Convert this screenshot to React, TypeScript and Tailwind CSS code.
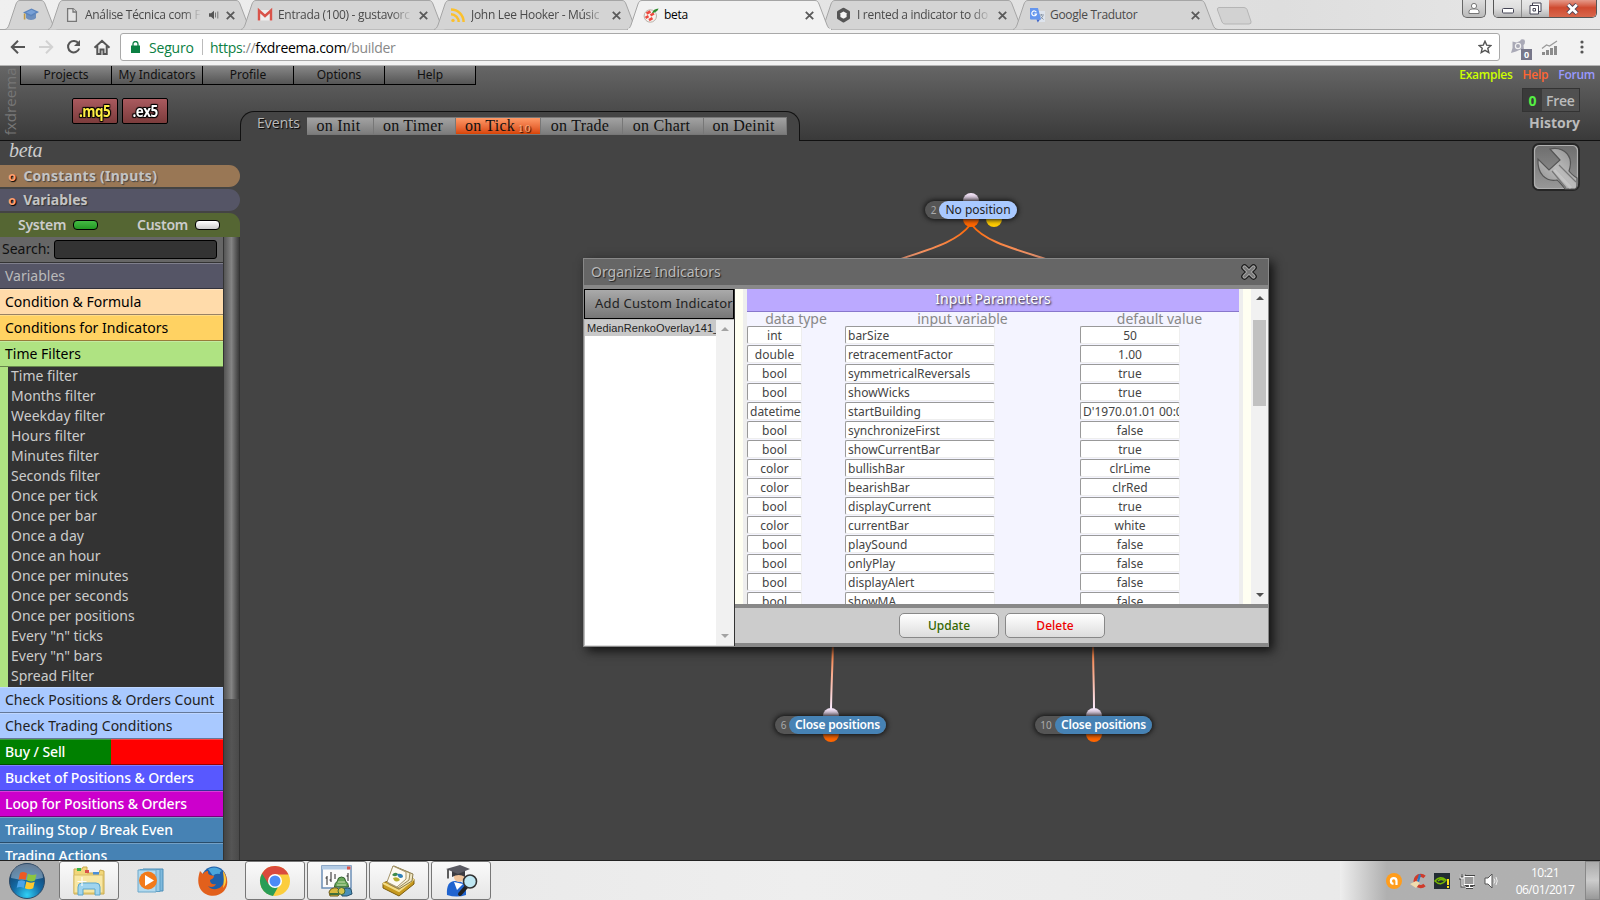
import type { ReactNode } from 'react';
import { clsx } from 'clsx';

type BrowserTab = { title: string; icon: ReactNode; audio?: boolean; active?: boolean; faded?: boolean };

const browserTabs: BrowserTab[] = [
  { title: 'Análise Técnica com F', icon: <PageIcon />, audio: true, faded: true },
  { title: 'Entrada (100) - gustavorc', icon: <GmailIcon />, faded: true },
  { title: 'John Lee Hooker - Músic', icon: <RssIcon />, faded: true },
  { title: 'beta', icon: <DreemaIcon />, active: true },
  { title: 'I rented a indicator to do', icon: <HexIcon />, faded: true },
  { title: 'Google Tradutor', icon: <TranslateIcon /> },
];

const menuItems = ['Projects', 'My Indicators', 'Profile', 'Options', 'Help'];

const events = [
  { label: 'on Init', width: 'w-[67px]' },
  { label: 'on Timer', width: 'w-[82px]' },
  { label: 'on Tick', width: 'w-[85px]', count: 10 },
  { label: 'on Trade', width: 'w-[82px]' },
  { label: 'on Chart', width: 'w-[81px]' },
  { label: 'on Deinit', width: 'w-[83px]' },
];

const topCategories = [
  { label: 'Variables', style: 'bg-[#555566] text-[#bbb]' },
  { label: 'Condition & Formula', style: 'bg-[#ffdbaa] text-black' },
  { label: 'Conditions for Indicators', style: 'bg-[#ffd262] text-black' },
  { label: 'Time Filters', style: 'bg-[#afe382] text-black' },
];

const timeFilters = [
  'Time filter', 'Months filter', 'Weekday filter', 'Hours filter', 'Minutes filter', 'Seconds filter',
  'Once per tick', 'Once per bar', 'Once a day', 'Once an hour', 'Once per minutes', 'Once per seconds',
  'Once per positions', 'Every "n" ticks', 'Every "n" bars', 'Spread Filter',
];

const bottomCategories = [
  { label: 'Check Positions & Orders Count', style: 'bg-[#a9c9ff] text-[#222]' },
  { label: 'Check Trading Conditions', style: 'bg-[#a9c9ff] text-[#222]' },
  { label: 'Buy / Sell', style: 'bg-linear-to-r from-[#008000] from-50% to-[#ff0000] to-50% text-white font-medium tracking-[-0.1px]' },
  { label: 'Bucket of Positions & Orders', style: 'bg-[#5858ff] text-white font-medium tracking-[-0.1px]' },
  { label: 'Loop for Positions & Orders', style: 'bg-[#cc00cc] text-white font-medium tracking-[-0.1px]' },
  { label: 'Trailing Stop / Break Even', style: 'bg-[#4682b4] text-white font-medium tracking-[-0.1px]' },
  { label: 'Trading Actions', style: 'bg-[#4682b4] text-white font-medium tracking-[-0.1px]' },
];

const params = [
  ['int', 'barSize', '50'],
  ['double', 'retracementFactor', '1.00'],
  ['bool', 'symmetricalReversals', 'true'],
  ['bool', 'showWicks', 'true'],
  ['datetime', 'startBuilding', "D'1970.01.01 00:00"],
  ['bool', 'synchronizeFirst', 'false'],
  ['bool', 'showCurrentBar', 'true'],
  ['color', 'bullishBar', 'clrLime'],
  ['color', 'bearishBar', 'clrRed'],
  ['bool', 'displayCurrent', 'true'],
  ['color', 'currentBar', 'white'],
  ['bool', 'playSound', 'false'],
  ['bool', 'onlyPlay', 'false'],
  ['bool', 'displayAlert', 'false'],
  ['bool', 'showMA', 'false'],
];

/* ---------- browser icons ---------- */

function PageIcon() {
  return (
    <svg width="16" height="16" viewBox="0 0 16 16" fill="#e4e4e4" stroke="#777" strokeWidth="1.3">
      <path d="M3.6 1.6h5.6l3.2 3.2v9.6H3.6z" />
      <path d="M9 1.6V5h3.4" />
    </svg>
  );
}

function GmailIcon() {
  return (
    <svg width="16" height="16" viewBox="0 0 16 16">
      <path d="M1 3h14v10.5H1z" fill="#eee" />
      <path d="M2 13.5V3.5l6 5.500 6-5.500v10" fill="none" stroke="#d9534a" strokeWidth="2.4" />
    </svg>
  );
}

function RssIcon() {
  return (
    <svg width="16" height="16" viewBox="0 0 16 16" fill="none" stroke="#fbc02d" strokeWidth="2.5">
      <circle cx="3" cy="13.4" r="1.7" fill="#fbc02d" stroke="none" />
      <path d="M1 7.3a7.7 7.7 0 0 1 7.7 7.7M1 2.4A12.6 12.6 0 0 1 13.6 15" />
    </svg>
  );
}

function DreemaIcon() {
  return (
    <svg width="16" height="16" viewBox="0 0 16 16">
      <circle cx="7.3" cy="9" r="6.2" fill="#f6f2ee" stroke="#b9b0a8" />
      <path d="M3.500 6.500l4-2M2.500 10.800l3-1.600M7.500 8.300l3.500-1.900M6 13.200l3.500-2" stroke="#ee4a40" strokeWidth="2.600" />
      <path d="M9 6c1-3 3-4.400 6.600-4.600C14.800 4 12.500 5.500 9 6z" fill="#2e8b2e" />
    </svg>
  );
}

function HexIcon() {
  return (
    <svg width="16" height="16" viewBox="0 0 16 16">
      <path d="M7.500 2.500l4.800 2.800v5.600l-4.800 2.800-4.800-2.800V5.300z" fill="#f4f4f4" stroke="#555" strokeWidth="3.400" strokeLinejoin="round" />
    </svg>
  );
}

function TranslateIcon() {
  return (
    <svg width="17" height="17" viewBox="0 0 17 17">
      <path d="M6 4h10v11H9z" fill="#dde3ec" />
      <path d="M10 8h5M12.500 7v1.500M14 9l-3 3.500M11.500 9.500l3 3" stroke="#8a97a8" fill="none" />
      <path d="M1 1h8l3 11.500H2a1 1 0 0 1-1-1z" fill="#6596ee" />
      <path d="M7.500 12.500H11L8.800 15.500z" fill="#4267c8" />
      <path d="M7.300 5.200A2.400 2.400 0 1 0 7.500 7H5.300" fill="none" stroke="#fff" strokeWidth="1.200" />
    </svg>
  );
}

function CapIcon() {
  return (
    <svg width="18" height="16" viewBox="0 0 18 16">
      <path d="M4 8v4c2 2.600 8 2.600 10 0V8z" fill="#6d8fbe" />
      <path d="M1 6.500L9.500 2.500 17 6 9 10.500z" fill="#5b84bd" />
      <path d="M4 6.500l5.500-2.700 4.500 2.200-5 2.700z" fill="#78a0d6" />
      <path d="M2.600 7.500v6" stroke="#c09a45" strokeWidth="1.600" />
    </svg>
  );
}

function CloseIcon() {
  return (
    <svg width="9" height="9" viewBox="0 0 9 9" stroke="#5a5a5a" strokeWidth="1.800">
      <path d="M.8.8l7.400 7.400M8.200.8L.8 8.200" />
    </svg>
  );
}

/* ---------- browser chrome ---------- */

function Tab({ tab }: { tab: BrowserTab }) {
  return (
    <div className={clsx('relative -mr-3 h-[29px] w-[205px] shrink-0', tab.active && 'z-10')}>
      <svg className="absolute inset-0" width="205" height="30" viewBox="0 0 205 30">
        <path
          d="M0 29.500C2 29 3 27.500 4 25L11 4C12 1.500 13 .5 15 .5H188c2 0 3 1 4 3.500l8 21c1 2.500 2 4 5 4.500"
          fill={tab.active ? '#f2f2f2' : '#d4d4d4'}
          stroke="#a5a5a5"
        />
        {tab.active && <path d="M1 29.500H204" stroke="#f2f2f2" strokeWidth="2" />}
      </svg>
      <div className="relative flex h-full items-center pl-4 pt-px">
        <span className="w-[21px] shrink-0">{tab.icon}</span>
        <span
          className={clsx(
            'overflow-hidden whitespace-nowrap font-["Open_Sans",sans-serif] text-[12px] tracking-[-0.3px]',
            tab.active ? 'text-black' : 'text-[#4a4a4a]',
            tab.audio ? 'w-[116px]' : 'w-[134px]',
            tab.faded && 'mask-r-from-85%',
          )}
        >
          {tab.title}
        </span>
        {tab.audio && (
          <svg className="ml-2" width="10" height="10" viewBox="0 0 10 10">
            <path d="M0 3.300h2L5 .8v8.400L2 6.700H0z" fill="#555" />
            <path d="M6.500 2.500v5M8.800 1.500v7" stroke="#777" />
          </svg>
        )}
        <span className="ml-[7px]"><CloseIcon /></span>
      </div>
    </div>
  );
}

function TabStrip() {
  return (
    <div className="flex h-[29px] bg-linear-to-r from-[#f0f0f0] via-[#dedede] via-80% to-[#e8e8e8]">
      <div className="relative -mr-[10px] ml-[5px] w-[53px] shrink-0">
        <svg className="absolute inset-0" width="53" height="30" viewBox="0 0 53 30">
          <path d="M0 29.500c2-.5 3-2 4-4.500L11 4c1-2.500 2-3.500 4-3.500h21c2 0 3 1 4 3.500l8 21c1 2.500 2 4 5 4.500" fill="#d4d4d4" stroke="#a5a5a5" />
        </svg>
        <div className="relative pl-[17px] pt-1.5"><CapIcon /></div>
      </div>
      <div className="flex">
        {browserTabs.map((tab) => <Tab key={tab.title} tab={tab} />)}
      </div>
      <svg className="ml-[10px] mt-[6px]" width="36" height="19" viewBox="0 0 36 19">
        <path d="M3 1.500h25q2 0 3 2l4 12q.5 2.500-2 2.500H9q-2 0-3-2L1.500 4Q1 1.500 3 1.500z" fill="#d2d2d2" stroke="#b5b5b5" />
      </svg>
      <div className="ml-auto mr-[3px] flex h-[18px]">
        <div className="mr-[7px] flex w-6 items-center justify-center rounded-b-[5px] border border-t-0 border-[#666] bg-linear-to-b from-[#ddd] to-[#bbb]">
          <svg width="12" height="13" viewBox="0 0 12 13" fill="#fff" stroke="#777">
            <path d="M1 11.500V9q1-2 3-2h4q2 0 3 2v2.500z" />
            <circle cx="6" cy="4" r="2.600" />
          </svg>
        </div>
        <div className="flex overflow-hidden rounded-b-[5px] border border-t-0 border-[#555]">
          <div className="flex w-7 items-center justify-center border-r border-[#888] bg-linear-to-b from-[#e8e8e8] via-[#ddd] to-[#b4b4b4]">
            <svg className="mt-1" width="12" height="6" viewBox="0 0 12 6"><rect x=".5" y=".5" width="11" height="4.500" rx="1" fill="#fff" stroke="#445" /></svg>
          </div>
          <div className="flex w-[27px] items-center justify-center bg-linear-to-b from-[#e8e8e8] via-[#ddd] to-[#b4b4b4]">
            <svg width="13" height="13" viewBox="0 0 13 13" fill="#fff" stroke="#445">
              <path d="M3.500 1h8.500v8.500H3.500z" />
              <path d="M1 3.500h8.500V12H1z" />
              <path d="M4 6.500h2.500V9H4z" />
            </svg>
          </div>
          <div className="flex w-[47px] items-center justify-center bg-linear-to-b from-[#e59a8a] via-[#cf4a30] via-45% to-[#d8674c]">
            <svg width="13" height="12" viewBox="0 0 13 12">
              <path d="M2 1.500l9 9M11 1.500l-9 9" stroke="#545" strokeWidth="4.600" />
              <path d="M2.200 1.700l8.600 8.600M10.800 1.700l-8.600 8.600" stroke="#fff" strokeWidth="2.800" />
            </svg>
          </div>
        </div>
      </div>
    </div>
  );
}

function Toolbar() {
  return (
    <div className="flex h-[37px] items-center border-b border-t border-b-[#b4b4b4] border-t-[#a5a5a5] bg-[#f2f2f2] pb-px">
      <div className="flex w-[120px] gap-3 pl-[10px]">
        <svg width="16" height="16" viewBox="0 0 16 16" fill="none" stroke="#555" strokeWidth="2"><path d="M15 8H2M8 1.800L1.800 8 8 14.200" /></svg>
        <svg width="16" height="16" viewBox="0 0 16 16" fill="none" stroke="#d2d2d2" strokeWidth="2"><path d="M1 8h13M8 1.800L14.200 8 8 14.200" /></svg>
        <svg width="16" height="16" viewBox="0 0 16 16" fill="none" stroke="#555" strokeWidth="2"><path d="M12.500 4.500A5.700 5.700 0 1 0 13.200 9.500" /><path d="M14 1v6H8z" fill="#555" stroke="none" /></svg>
        <svg className="-ml-px" width="18" height="16" viewBox="0 0 18 16" fill="none" stroke="#555" strokeWidth="2"><path d="M1.500 8.800L9 1.800l7.500 7M4.300 7v8h3.200v-4.500h3V15h3.200V7" /></svg>
      </div>
      <div className="flex h-7 w-[1380px] items-center rounded-[3px] border border-[#a9a9a9] bg-white pl-[10px] font-['Open_Sans',sans-serif] text-[14px]">
        <svg width="9" height="12" viewBox="0 0 9 12"><path d="M0 4.500h9V12H0z" fill="#0b8043" /><path d="M2 5V3a2.500 2.500 0 0 1 5 0v2" fill="none" stroke="#0b8043" strokeWidth="1.300" /></svg>
        <span className="ml-[9px] w-[44px] whitespace-nowrap tracking-[-0.2px] text-[#0b8043]">Seguro</span>
        <span className="ml-[9px] mr-[7px] h-4 w-px bg-[#bbb]" />
        <span className="whitespace-nowrap tracking-[-0.3px] text-[#888]">
          <span className="text-[#0b8043]">https</span>://<span className="text-black">fxdreema.com</span>/builder
        </span>
        <svg className="ml-auto mr-[7px]" width="14" height="14" viewBox="0 0 14 14" fill="none" stroke="#555" strokeWidth="1.400"><path d="M7 1.200l1.700 3.900 4.300.4-3.200 2.800 1 4.200L7 10.300l-3.800 2.200 1-4.200L1 5.500l4.300-.4z" /></svg>
      </div>
      <div className="relative ml-[10px] w-[24px]">
        <svg width="16" height="16" viewBox="0 0 16 16">
          <path d="M2.500 2.500l4 1L10 2 11 .5q4-1 4 2T13.500 6l.5 5-3.500-.5L6 12.500 1 14l1.500-5z" fill="#a9a9b6" />
          <circle cx="8" cy="7" r="2.600" fill="none" stroke="#f2f2f2" strokeWidth="1.200" />
        </svg>
        <span className="absolute left-[11px] top-[10px] flex h-[11px] w-[11px] items-center justify-center bg-[#77778a] font-['Open_Sans',sans-serif] text-[9px] font-bold text-white">0</span>
      </div>
      <svg className="ml-[7px] mt-px" width="17" height="16" viewBox="0 0 17 16" fill="#8c8c8c">
        <path d="M1 12h3v3H1zM5 10h3v5H5zM9 8h3v7H9zM13 6h3v9h-3z" />
        <path d="M1 8.500l4.500-3.500 3 1L16 1" fill="none" stroke="#999" strokeWidth="1.200" />
      </svg>
      <svg className="ml-[22px]" width="4" height="14" viewBox="0 0 4 14" fill="#555"><circle cx="2" cy="2" r="1.600" /><circle cx="2" cy="7" r="1.600" /><circle cx="2" cy="12" r="1.600" /></svg>
    </div>
  );
}

/* ---------- builder header ---------- */

function Wrench() {
  return (
    <svg width="48" height="48" viewBox="0 0 48 48">
      <defs>
        <linearGradient id="plate" x1="0" y1="0" x2="0" y2="1"><stop offset="0" stopColor="#6c6c6c" /><stop offset="1" stopColor="#999" /></linearGradient>
        <linearGradient id="steel" x1="0" y1="1" x2="1" y2="0"><stop offset="0" stopColor="#888" /><stop offset=".5" stopColor="#bbb" /><stop offset="1" stopColor="#8a8a8a" /></linearGradient>
      </defs>
      <rect x="1" y="1" width="46" height="46" rx="6" fill="url(#plate)" stroke="#262626" strokeWidth="2" />
      <rect x="2.500" y="2.500" width="43" height="43" rx="5" fill="none" stroke="#b0b0b0" strokeWidth="1.200" />
      <path
        d="M18 6c8-2 17 1 20 10 1 4 0 9-1 12 2 3 5 5 8 7v8q0 2-2 3H33c-3-4-5-7-8-9C14 39 5 31 6 16l11 11L28 17z"
        fill="url(#steel)"
        stroke="#555"
        strokeWidth="1.200"
      />
      <path d="M22 27l17 18" stroke="#cfcfcf" strokeWidth="3" opacity=".6" />
      <path d="M20 28l14 17M27 22l17 17" stroke="#777" strokeWidth="1.200" />
    </svg>
  );
}

function FileButton({ children, color }: { children: ReactNode; color: string }) {
  return (
    <span className={clsx('flex h-[26px] w-[46px] items-center justify-center rounded-[2px] border border-black bg-linear-to-b from-[#aa5a5f] to-[#7c3c3c] [text-shadow:1px_1px_1px_#000,-1px_-1px_1px_#000,1px_-1px_1px_#000,-1px_1px_1px_#000,0_0_2px_#000]', color)}>
      <span className="scale-x-[0.84] leading-none">{children}</span>
    </span>
  );
}

function Header() {
  return (
    <header className="flex h-[75px] border-b border-[#111] bg-linear-to-b from-[#666] to-[#3a3a3a]">
      <div className="flex w-5 items-center justify-center">
        <span className="-rotate-90 pl-1 font-['Open_Sans',sans-serif] text-[15px] tracking-[0.1px] text-[#777]">fxdreema</span>
      </div>
      <div className="flex w-[220px] flex-col">
        <nav className="flex h-[19px] w-[456px] border-l border-black">
          {menuItems.map((item) => (
            <span key={item} className="flex h-[19px] w-[91px] items-center justify-center whitespace-nowrap border-b border-r border-black bg-linear-to-b from-[#888] to-[#555] text-[12px] text-[#111]">
              {item}
            </span>
          ))}
        </nav>
        <div className="ml-[52px] mt-[13px] flex gap-1 font-['Open_Sans',sans-serif] text-[16px] font-bold tracking-[-0.6px]">
          <FileButton color="text-[#ffee44]">.mq5</FileButton>
          <FileButton color="text-white">.ex5</FileButton>
        </div>
      </div>
      <div className="relative mb-[-1px] mt-[45px] flex h-[30px] w-[560px] rounded-t-[14px] border border-b-0 border-[#111] bg-[#444] pl-4">
        <span className="mt-0.5 w-[50px] font-['Open_Sans',sans-serif] text-[14px] leading-[17px] text-[#bbb] [text-shadow:1px_1px_1px_#000]">Events</span>
        <div className="mt-[5px] flex h-[18px]">
          {events.map((ev) => (
            <span
              key={ev.label}
              className={clsx(
                'relative flex items-center justify-center whitespace-nowrap border border-l-0 border-[#777] font-["Liberation_Serif",serif] text-[16px] tracking-[0.25px] text-[#111]',
                ev.width,
                ev.count ? 'bg-linear-to-b from-[#ff9966] to-[#d84400] pr-4' : 'bg-linear-to-b from-[#a2a2a2] to-[#7c7c7c] pr-[3px]',
              )}
            >
              {ev.label}
              {ev.count && <span className="absolute right-[9px] top-px font-['DejaVu_Serif',serif] text-[10px] leading-[20px] text-[#ffb07c] [text-shadow:1px_1px_1px_#000]">{ev.count}</span>}
            </span>
          ))}
        </div>
      </div>
      <div className="ml-auto flex flex-col items-end font-['Open_Sans',sans-serif]">
        <div className="flex h-[18px] items-center gap-[10px] pr-[5px] text-[12px] font-semibold tracking-[-0.25px]">
          <span className="text-[#ccff00]">Examples</span>
          <span className="text-[#ff6633]">Help</span>
          <span className="text-[#9999ff]">Forum</span>
        </div>
        <div className="mr-5 mt-1 flex h-6 w-[58px] items-center border border-[#333] bg-[#505050] text-[14px] font-semibold">
          <span className="flex h-full w-[19px] items-center justify-center bg-[#3a3a3a] font-bold text-[#55ee44]">0</span>
          <span className="pl-1 tracking-[-0.3px] text-[#bbb]">Free</span>
        </div>
        <span className="mr-5 mt-px text-[14px] font-bold leading-5 text-[#bbb]">History</span>
      </div>
    </header>
  );
}

/* ---------- sidebar ---------- */

function Category({ label, style }: { label: string; style: string }) {
  return (
    <div className={clsx('h-[26px] shrink-0 whitespace-nowrap border-b border-t border-b-black/40 border-t-white/25 bg-origin-border pl-[5px] text-[14px] leading-[23px]', style)}>
      {label}
    </div>
  );
}

function Sidebar() {
  return (
    <aside className="flex w-60 shrink-0 flex-col">
      <div className="h-6 pl-[9px] font-['Liberation_Serif',serif] text-[20px] italic leading-[19px] tracking-[-0.3px] text-[#ccc]">beta</div>
      <div className="flex h-[22px] items-center rounded-r-[11px] bg-[#997755] pb-0.5 pl-2 text-[14px] font-bold tracking-[0.25px] text-[#c4c4c4] [text-shadow:1px_1px_1px_#444]">
        <span className="mr-[7px] mt-1 text-[13px] text-[#ffa070] [text-shadow:1px_1px_1px_#000]">o</span>Constants (Inputs)
      </div>
      <div className="mt-0.5 flex h-[22px] items-center rounded-r-[11px] bg-[#555566] pb-0.5 pl-2 text-[14px] font-bold text-[#c4c4c4] [text-shadow:1px_1px_1px_#333]">
        <span className="mr-[7px] mt-1 text-[13px] text-[#ffa070] [text-shadow:1px_1px_1px_#000]">o</span>Variables
      </div>
      <div className="mt-0.5 flex h-6 items-center rounded-tr-[11px] bg-[#556633] pl-[18px] text-[14px] font-semibold tracking-[-0.25px] text-[#ccc]">
        <span className="-mt-0.5 w-[55px]">System</span>
        <span className="h-[10px] w-[25px] rounded-[4px] border border-black bg-linear-to-b from-[#44bb44] to-[#229922]" />
        <span className="-mt-0.5 ml-[39px] w-[58px]">Custom</span>
        <span className="h-[10px] w-[25px] rounded-[4px] border border-black bg-linear-to-b from-white to-[#ccc]" />
      </div>
      <div className="flex min-h-0 flex-1">
        <div className="flex w-[223px] flex-col overflow-hidden bg-[#333]">
          <div className="flex h-[26px] shrink-0 items-center border-b border-[#333] bg-[#666] pl-[2px] text-[14px] text-[#111]">
            <span className="-mt-0.5 w-[52px]">Search:</span>
            <span className="h-[19px] w-[163px] rounded-[3px] border border-black bg-[#333]" />
          </div>
          {topCategories.map((c) => <Category key={c.label} {...c} />)}
          <ul className="shrink-0 border-l-8 border-[#afe382] bg-[#333]">
            {timeFilters.map((name) => (
              <li key={name} className="h-5 pl-[3px] text-[14px] leading-[18px] text-[#ccc]">{name}</li>
            ))}
          </ul>
          {bottomCategories.map((c) => <Category key={c.label} {...c} />)}
        </div>
        <div className="w-[17px] border-x border-[#333] bg-linear-to-r from-[#444] via-[#555] to-[#4a4a4a]">
          <div className="h-[462px] bg-linear-to-r from-[#555] via-[#848484] to-[#3c3c3c]" />
        </div>
      </div>
    </aside>
  );
}

/* ---------- canvas ---------- */

type NodeProps = { id: number; label: string; place: string; idWidth: string; pill: string; ports: string; extra?: boolean };

function Block({ id, label, place, idWidth, pill, ports, extra }: NodeProps) {
  return (
    <div className={clsx('absolute', place)}>
      <span className={clsx('absolute top-[-8px] h-4 w-4 rounded-full bg-linear-to-b from-[#f8e8fc] to-[#998a9c]', ports)} />
      <span className={clsx('absolute top-[10px] h-4 w-4 rounded-full bg-[#ff6600]', ports)} />
      {extra && <span className="absolute left-[61px] top-[10px] h-4 w-4 rounded-full bg-[#ffcc00]" />}
      <div className="relative flex h-[18px] rounded-full bg-[#555] shadow-[0_0_5px_1px_#111]">
        <span className={clsx('text-center text-[10px] leading-[18px] text-[#aaa]', idWidth)}>{id}</span>
        <span className={clsx('flex-1 whitespace-nowrap rounded-full text-center text-[12px] leading-[17px]', pill)}>{label}</span>
      </div>
    </div>
  );
}

function Canvas() {
  return (
    <main className="relative flex-1 bg-[#444]">
      <div className="absolute right-5 top-0.5"><Wrench /></div>
      <svg className="absolute left-0 top-0" width="1360" height="719" viewBox="240 141 1360 719" fill="none" strokeWidth="2">
        <defs>
          <linearGradient id="wireTop" gradientUnits="userSpaceOnUse" x1="0" y1="226" x2="0" y2="262"><stop stopColor="#ff6600" /><stop offset="1" stopColor="#f2a488" /></linearGradient>
          <linearGradient id="wireEnd" gradientUnits="userSpaceOnUse" x1="0" y1="640" x2="0" y2="708"><stop stopColor="#f56a1c" /><stop offset="1" stopColor="#fbeafc" /></linearGradient>
        </defs>
        <path d="M970 225C957 242 930 249 898 260M972 225C985 242 1015 249 1049 260" stroke="url(#wireTop)" />
        <path d="M833 640C832.500 670 831.500 680 831 709M1093 640C1093 670 1094 680 1094 709" stroke="url(#wireEnd)" />
      </svg>
      <Block id={2} label="No position" place="left-[685px] top-[60px] w-[92px]" idWidth="w-[14px] pl-[3px]" pill="bg-[#a9c9ff] text-[#222]" ports="left-[38px]" extra />
      <Block id={6} label="Close positions" place="left-[535px] top-[575px] w-[111px]" idWidth="w-[14px] pl-[3px]" pill="bg-[#4682b4] text-white font-semibold tracking-[-0.2px]" ports="left-[48px]" />
      <Block id={10} label="Close positions" place="left-[795px] top-[575px] w-[117px]" idWidth="w-[20px] pl-[2px]" pill="bg-[#4682b4] text-white font-semibold tracking-[-0.2px]" ports="left-[51px]" />
      <Dialog />
    </main>
  );
}

/* ---------- dialog ---------- */

function Cell({ children, className }: { children: ReactNode; className: string }) {
  return (
    <span className={clsx('h-[18px] overflow-hidden whitespace-nowrap rounded-[2px] border border-b-[#eee] border-l-[#999] border-r-[#eee] border-t-[#999] bg-white px-[2px] text-[12px] leading-[17px] text-[#444]', className)}>
      {children}
    </span>
  );
}

function Arrow({ down, color }: { down?: boolean; color: string }) {
  return <svg width="8" height="4" viewBox="0 0 8 4" fill={color}><path d={down ? 'M0 0h8L4 4z' : 'M0 4h8L4 0z'} /></svg>;
}

function Dialog() {
  return (
    <section className="absolute left-[343px] top-[117px] flex h-[389px] w-[686px] flex-col border border-[#888] bg-[#888] shadow-[4px_4px_10px_#111]">
      <div className="flex h-[26px] shrink-0 items-center justify-between bg-[#666] pl-[7px] pr-[11px]">
        <span className="-mt-0.5 text-[14px] text-[#bbb] [text-shadow:1px_1px_1px_#222]">Organize Indicators</span>
        <svg width="16" height="16" viewBox="0 0 16 16" strokeLinecap="round">
          <path d="M3.500 3.500l9 9M12.500 3.500l-9 9" stroke="#1c1c1c" strokeWidth="6.600" />
          <path d="M3.500 3.500l9 9M12.500 3.500l-9 9" stroke="#a4a4a4" strokeWidth="4.200" />
          <path d="M3.500 3.500l9 9M12.500 3.500l-9 9" stroke="#777" strokeWidth="2" />
        </svg>
      </div>
      <div className="flex h-[361px] pt-1">
        <div className="flex h-[357px] w-[151px] flex-col border-r border-[#333] bg-white">
          <button className="h-[30px] w-[150px] overflow-hidden whitespace-nowrap border border-black bg-linear-to-b from-[#aaa] to-[#777] pl-[10px] text-left text-[13px] tracking-[0.22px] text-[#222]">Add Custom Indicator</button>
          <div className="flex flex-1 border border-[#bbb] border-r-0 border-b-[#ddd]">
            <div className="w-[131px] overflow-hidden">
              <div className="h-4 whitespace-nowrap bg-[#c8c8c8] pl-[2px] font-['Liberation_Sans',sans-serif] text-[11px] leading-4 tracking-[0.1px] text-[#222]">MedianRenkoOverlay141_</div>
            </div>
            <div className="flex flex-1 flex-col items-center justify-between bg-[#f1f1f1] py-[7px]">
              <Arrow color="#a3a3a3" />
              <Arrow down color="#a3a3a3" />
            </div>
          </div>
        </div>
        <div className="flex h-[357px] w-[533px] flex-col">
          <div className="flex h-[315px] shrink-0 overflow-hidden bg-[#fffff2]">
            <div className="ml-2 h-[330px] w-[500px] border-x-4 border-[#eee] bg-[#f4f4ff]">
              <div className="h-[23px] border-b border-[#8877cc] bg-[#bba9ff] text-center text-[14px] leading-[19px] text-white [text-shadow:1px_1px_2px_#222]">Input Parameters</div>
              <div className="flex h-[14px] whitespace-nowrap text-[14px] leading-[13px] text-[#888]">
                <span className="w-[98px] text-center">data type</span>
                <span className="w-[235px] text-center">input variable</span>
                <span className="w-[159px] text-center">default value</span>
              </div>
              {params.map(([type, name, value]) => (
                <div key={name} className="flex h-[19px]">
                  <Cell className="w-[55px] text-center">{type}</Cell>
                  <Cell className="ml-[43px] w-[150px]">{name}</Cell>
                  <Cell className={clsx('ml-[85px] w-[100px]', value.length < 12 && 'text-center')}>{value}</Cell>
                </div>
              ))}
            </div>
            <div className="ml-2 flex w-[17px] flex-col items-center justify-between bg-[#f1f1f1] py-[7px]">
              <Arrow color="#505050" />
              <div className="mb-auto mt-5 h-[86px] w-[13px] bg-[#c1c1c1]" />
              <Arrow down color="#505050" />
            </div>
          </div>
          <div className="flex h-[42px] justify-center gap-[6px] border-b-[3px] border-t-4 border-[#888] bg-[#ccc] pl-px pt-[5px] text-[12px] font-medium">
            <button className="h-[25px] w-[100px] rounded-[5px] border border-[#888] bg-linear-to-b from-white to-[#ddd] text-[#336600]">Update</button>
            <button className="h-[25px] w-[100px] rounded-[5px] border border-[#888] bg-linear-to-b from-white to-[#ddd] text-[#ee0000]">Delete</button>
          </div>
        </div>
      </div>
    </section>
  );
}

/* ---------- taskbar ---------- */

function StartOrb() {
  return (
    <svg width="38" height="38" viewBox="0 0 38 38">
      <defs>
        <radialGradient id="orb" cx=".5" cy=".9" r=".9"><stop stopColor="#2fd0f5" /><stop offset=".45" stopColor="#136aa5" /><stop offset="1" stopColor="#16365c" /></radialGradient>
      </defs>
      <circle cx="19" cy="19" r="17.500" fill="url(#orb)" stroke="#2e4a66" />
      <path d="M3 16a16 14 0 0 1 32 0q-16 4-32 0z" fill="#fff" opacity=".35" />
      <path d="M12 11q3-2 7 .3l-1.500 6.700q-4-2-7-.2z" fill="#ee5a24" />
      <path d="M20 11.700q4 2.300 8.500.5L27 18.500q-4 2-8.300-.2z" fill="#8cc63f" />
      <path d="M10.200 19q3.500-1.800 7 .2L15.700 26q-3.500-2-7-.2z" fill="#4aa3e8" />
      <path d="M18.400 19.600q4 2 8.300.2l-1.500 6.500q-4 2-8.300 0z" fill="#fdc92e" />
    </svg>
  );
}

function ExplorerIcon() {
  return (
    <svg width="34" height="32" viewBox="0 0 34 32">
      <path d="M2 4h8l1-2h4v6h12l1-3 4 1v23H2z" fill="#f2d77a" stroke="#c9a94c" />
      <path d="M5 3h4v3H5z" fill="#3ab54a" /><path d="M13 5h4v3h-4z" fill="#d9534a" /><path d="M21 7h6v3h-6z" fill="#4a8fd9" />
      <path d="M2 10h29v18H2z" fill="#f8e7a4" stroke="#d8bd66" />
      <path d="M6 30v-8q0-4 4-4h14q4 0 4 4v8h-5v-6H11v6z" fill="#9fd4ee" stroke="#5ba5cc" />
      <path d="M10 12v9M5.500 16.500h9" stroke="#fff" strokeWidth="1.200" opacity=".9" />
    </svg>
  );
}

function MediaPlayerIcon() {
  return (
    <svg width="30" height="28" viewBox="0 0 30 28">
      <path d="M6 2h20v22H6z" fill="#7fb9dc" stroke="#4b8db8" /><path d="M3 2.500h20v22H3z" fill="#9bcbe6" stroke="#5b9dc4" /><path d="M1 3h18v22H1z" fill="#b2d9ee" stroke="#6aa7ca" />
      <circle cx="11" cy="13.500" r="9" fill="#f27a1a" /><path d="M8 8l9 5.500-9 5.500z" fill="#fff" />
    </svg>
  );
}

function FirefoxIcon() {
  return (
    <svg width="32" height="32" viewBox="0 0 32 32">
      <circle cx="17" cy="14" r="12.500" fill="#1f5fa8" /><path d="M11 4q8-4 14 2-3 1-2 3-5-1-7 2z" fill="#4aa6dc" />
      <path d="M26 6c5 6 6 14 1 20-6 7-18 6-23-1C0 19 1 12 3 6l3 3c1-2 3-3 5-3 0 2 0 3 2 4l4 1c0 2-2 3-4 4 0 4 3 5 6 4-1 3-5 4-8 2 5 6 15 3 16-5 .3-4-1-8-1-10z" fill="#e2601c" />
      <path d="M26 6c4 5 4 13 0 17 1-6 1-11 0-17z" fill="#fccf3e" />
    </svg>
  );
}

function ChromeIcon() {
  return (
    <svg width="32" height="32" viewBox="0 0 32 32">
      <circle cx="16" cy="16" r="15" fill="#fbcd3c" />
      <path d="M3 8.500a15 15 0 0 0 11 22.400l6.500-11.400L16 16z" fill="#2a9d56" /><path d="M3 8.500A15 15 0 0 1 29.500 9.500H16L9.500 19z" fill="#da4a3c" />
      <circle cx="16" cy="16" r="7" fill="#fff" /><circle cx="16" cy="16" r="5.500" fill="#4c8bf5" />
    </svg>
  );
}

function MetaTraderIcon() {
  return (
    <svg width="32" height="32" viewBox="0 0 32 32">
      <path d="M1 1h29v22H1z" fill="#fbfbfb" stroke="#6b8fb6" strokeWidth="1.500" /><path d="M1 1h29v3.500H1z" fill="#b4cce6" /><path d="M26 1.500h3.500v3H26z" fill="#d9534a" />
      <path d="M6 11v9M4.500 13H6M10 7v10M8.500 15H10M14 9v5M27 8v8M25.500 11H27" stroke="#222" />
      <path d="M13.500 22q0-4 3-6 0-4 4-4t4 4q3 2 3 6z" fill="#6aa85a" stroke="#2f5f2c" /><path d="M17 17h7M16 20h9" stroke="#c9dcae" />
      <path d="M8 27q2-5 8-4l4 4-3 4H9z" fill="#d8b93e" stroke="#6b5a1c" /><path d="M9 29h9" stroke="#3f6f3a" strokeWidth="2" />
      <path d="M20 27q3-6 10-3l1 5-5 2h-5z" fill="#4b8fb8" stroke="#244f6a" /><circle cx="20.500" cy="26" r="3.500" fill="#d5c34c" stroke="#3b6a3a" />
    </svg>
  );
}

function EditorIcon() {
  return (
    <svg width="34" height="32" viewBox="0 0 34 32">
      <path d="M1 18l5-2 26-2v5L17 31 1 23z" fill="#c79a1f" stroke="#7d5c0c" />
      <path d="M1 18l16 8L32 14" fill="none" stroke="#f3dc86" strokeWidth="2" />
      <path d="M12 1l19 8-1 7-13 8-10-5z" fill="#efe6c2" stroke="#8a7a4a" /><path d="M11 1l17 7-1 7-11 8-10-5z" fill="#f7f0d8" stroke="#9a8a58" />
      <path d="M11 1l13 6v7l-9 8-10-5z" fill="#fdfaf0" stroke="#a4946a" />
      <path d="M10 10q3-4 6-1-2 4-6 1z" fill="#3f8a4a" /><path d="M15 9q6-1 6 3-4 3-6-3z" fill="#2f7fb8" /><path d="M11 13q5-2 7 2-5 4-7-2z" fill="#b7ad2e" />
    </svg>
  );
}

function WizardIcon() {
  return (
    <svg width="34" height="34" viewBox="0 0 34 34">
      <path d="M3 31q-1-14 8-14 11 0 11 8v6q-9 3-19 0z" fill="#1f63cf" /><path d="M10 18l3 8 6-6z" fill="#fff" /><circle cx="15" cy="13" r="5" fill="#f0c39a" />
      <path d="M8 7v6q7-4 13 0V7z" fill="#3c3c42" /><path d="M2 5l14-4 10 4-12 5z" fill="#5a5a62" /><path d="M4 5.500v9" stroke="#2b2b2b" strokeWidth="1.500" />
      <path d="M23 22l-7 8" stroke="#222" strokeWidth="4" strokeLinecap="round" /><circle cx="26" cy="17.500" r="6.500" fill="#bfe7f2" stroke="#333" strokeWidth="1.600" />
    </svg>
  );
}

function TaskButton({ children, open, className }: { children: ReactNode; open?: boolean; className: string }) {
  return (
    <div className={clsx('flex h-[39px] items-center justify-center', open && 'rounded-[3px] border border-[#777] bg-linear-to-b from-[#fafafa] to-[#e6e6e6]', className)}>
      {children}
    </div>
  );
}

function Taskbar() {
  return (
    <footer className="flex h-10 border-t border-[#222] bg-linear-to-r from-[#e4e4e4] via-[#eeeeee] via-50% to-[#e8e8e8]">
      <div className="flex w-[59px] items-center bg-[#b0b0b0] pl-2"><StartOrb /></div>
      <TaskButton open className="w-[60px]"><ExplorerIcon /></TaskButton>
      <TaskButton className="w-[62px] pl-1"><MediaPlayerIcon /></TaskButton>
      <TaskButton className="w-[64px]"><FirefoxIcon /></TaskButton>
      <div className="flex gap-[2px]">
        <TaskButton open className="w-[60px]"><ChromeIcon /></TaskButton>
        <TaskButton open className="w-[60px]"><MetaTraderIcon /></TaskButton>
        <TaskButton open className="w-[60px]"><EditorIcon /></TaskButton>
        <TaskButton open className="w-[60px]"><WizardIcon /></TaskButton>
      </div>
      <div className="ml-auto flex w-[260px] items-center bg-linear-to-r from-[#eee] to-[#b0b0b0] to-18% pl-[46px]">
        <svg width="16" height="16" viewBox="0 0 16 16"><circle cx="8" cy="8" r="8" fill="#ff9d1c" /><path d="M10.500 12V8A2.800 2.800 0 1 0 7.500 10.800" fill="none" stroke="#fff" strokeWidth="2.200" /></svg>
        <svg className="ml-2" width="16" height="16" viewBox="0 0 16 16"><path d="M14.500 4A5.500 5.500 0 1 0 14.500 12" fill="none" stroke="#cf3b2b" strokeWidth="3.500" /><path d="M9 1l2 1-2 7-2-1z" fill="#2c79c4" /><path d="M0 11l6-3 4 2-4 5z" fill="#f0dcae" /></svg>
        <svg className="ml-2" width="16" height="16" viewBox="0 0 16 16"><path d="M0 0h16v16H0z" fill="#222c33" /><path d="M1 8q5-6 11-1-5 7-11 1zM4 8q3-3 6-.5" fill="none" stroke="#76b900" strokeWidth="1.500" /><path d="M13 6h2v6h-2zM13 13h2v2h-2z" fill="#ffe11c" /></svg>
        <svg className="ml-[9px]" width="16" height="16" viewBox="0 0 16 16" fill="none">
          <path d="M5 3.500h10v8H5zM7 14.500h7M10.500 12v2M1 1v4h4V1M3 5v8h3" stroke="#444" strokeWidth="2.800" />
          <path d="M5 3.500h10v8H5z" fill="#999" />
          <path d="M5 3.500h10v8H5zM7 14.500h7M10.500 12v2M1 1v4h4V1M3 5v8h3" stroke="#fff" strokeWidth="1.200" />
        </svg>
        <svg className="ml-[9px]" width="14" height="16" viewBox="0 0 14 16"><path d="M1 5h3l4-4v14l-4-4H1z" fill="#fff" stroke="#555" /><path d="M10 5.500q2 2.500 0 5M12 4q2.500 4 0 8" fill="none" stroke="#eee" /></svg>
        <div className="ml-[9px] w-[76px] text-center font-['Open_Sans',sans-serif] text-[12px] leading-[17px] tracking-[-0.5px] text-white">
          <div>10:21</div>
          <div>06/01/2017</div>
        </div>
        <div className="ml-auto h-full w-[15px] border border-[#888] bg-linear-to-b from-[#aaa] via-[#ccc] via-50% to-[#999]" />
      </div>
    </footer>
  );
}

export default function App() {
  return (
    <div className="flex h-[900px] w-[1600px] flex-col overflow-hidden bg-[#444] font-['Noto_Sans',sans-serif]">
      <TabStrip />
      <Toolbar />
      <Header />
      <div className="flex h-[719px]">
        <Sidebar />
        <Canvas />
      </div>
      <Taskbar />
    </div>
  );
}
